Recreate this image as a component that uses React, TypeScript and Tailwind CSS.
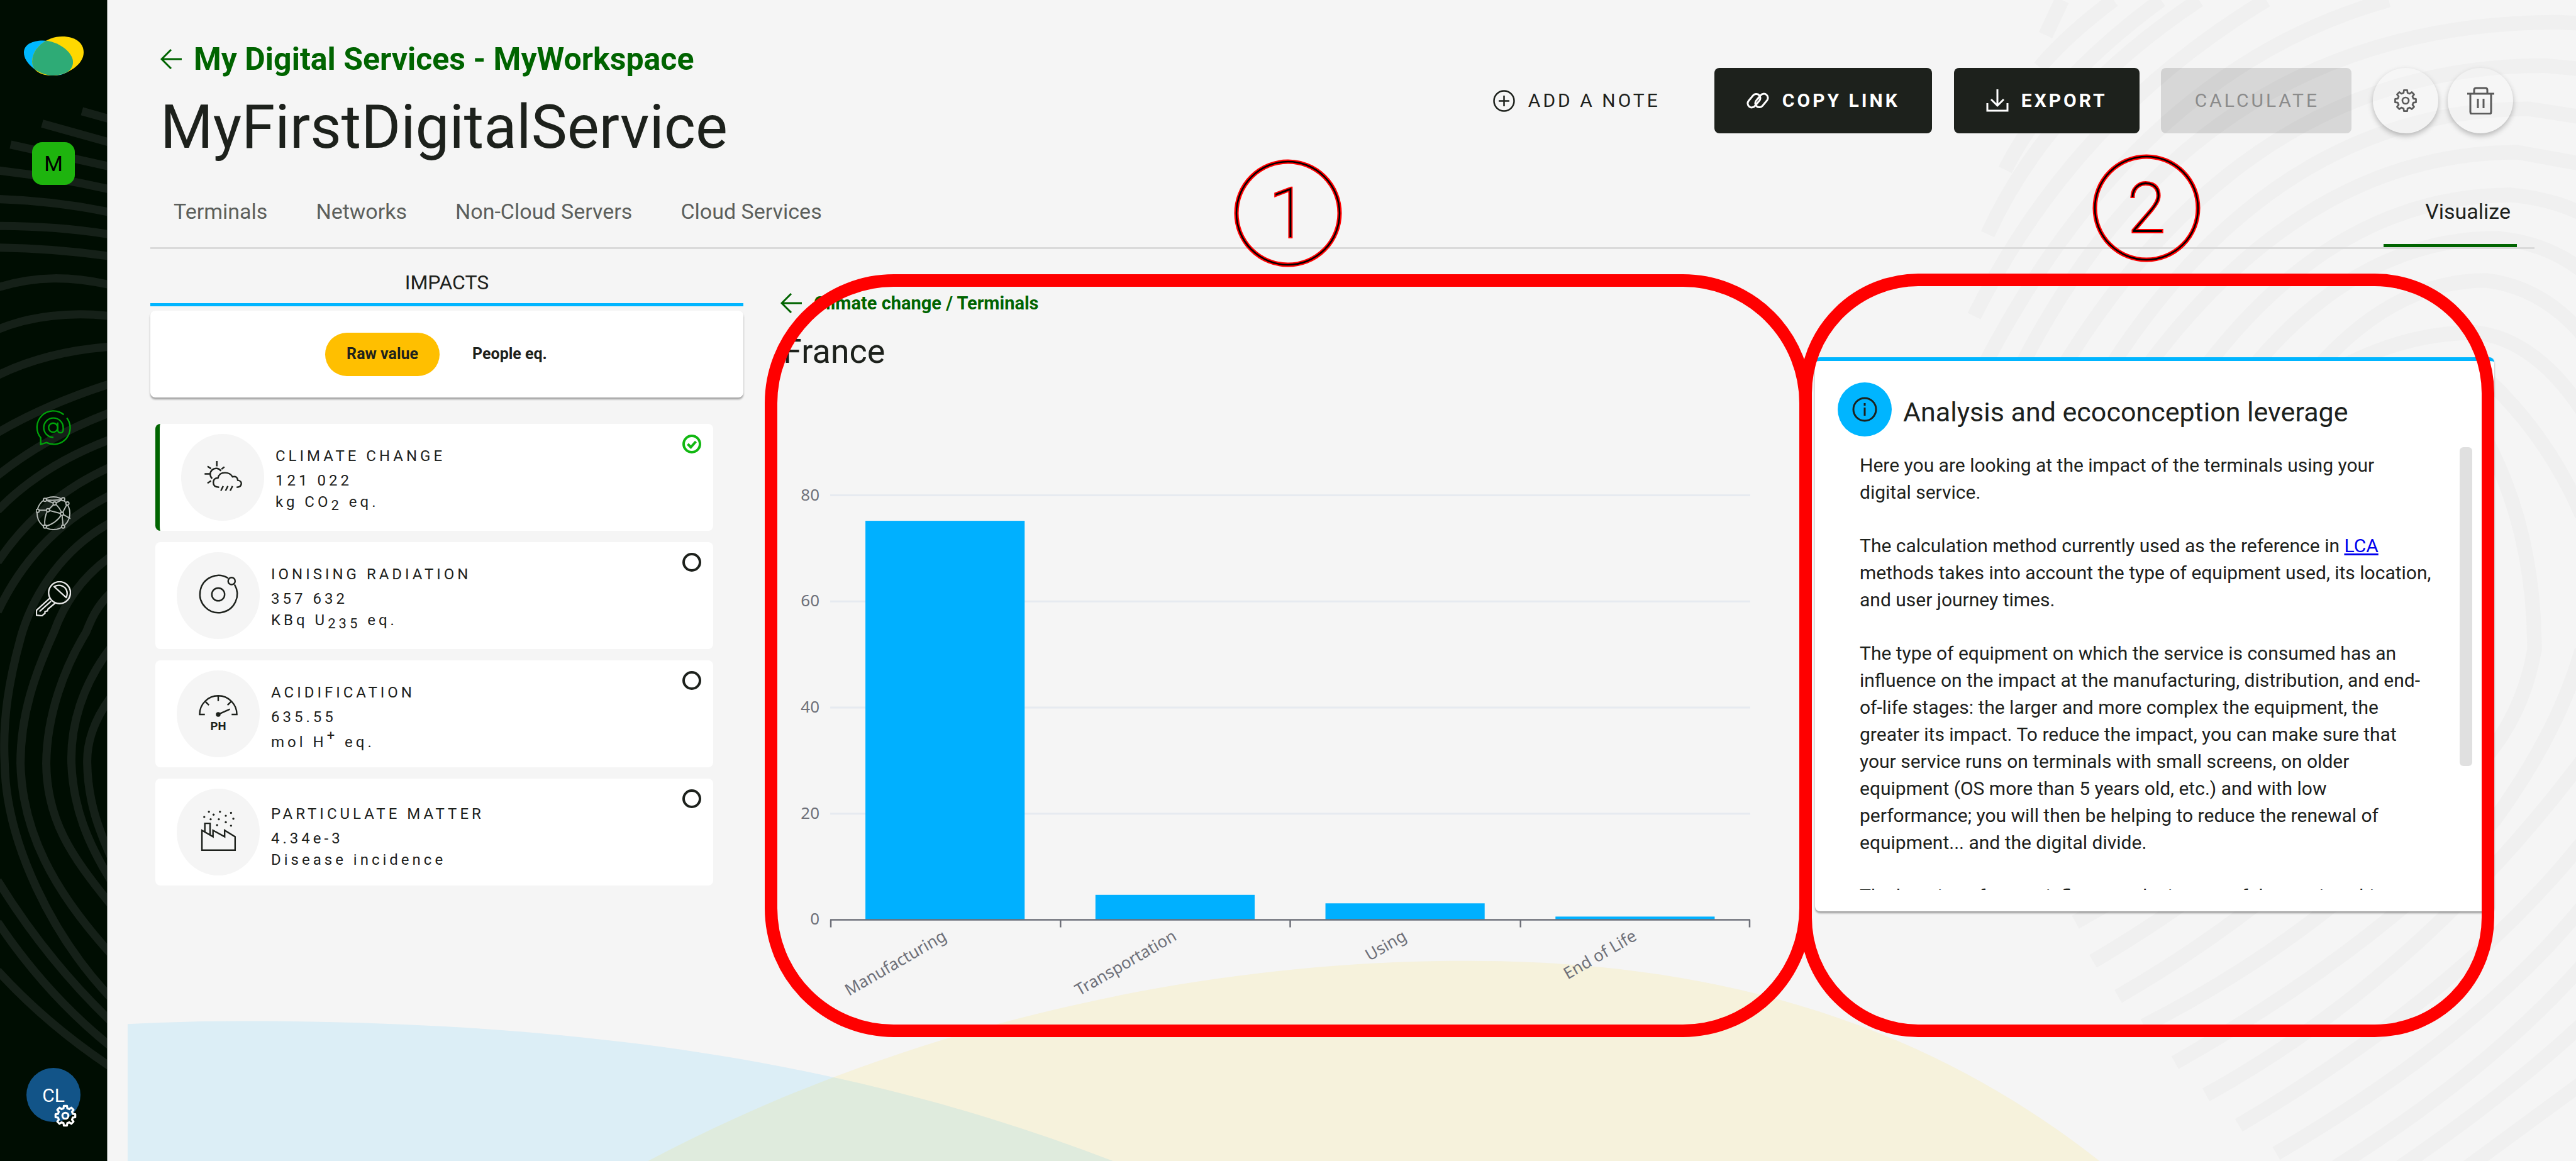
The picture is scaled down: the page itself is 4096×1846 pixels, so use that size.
import React, { useState } from "react";

const ARCS = [
  "M140 190L190 204", "M72 211L190 244", "M18 247L190 285", "M-4 291Q100 303 190 324",
  "M-4 340Q95 343 190 363", "M-4 386Q100 386 190 401", "M-4 423Q90 424 190 438",
  "M-4 491C60 471 120 471 190 487", "M-4 563C50 540 120 532 190 540", "M-4 641Q80 600 190 592",
  "M-4 739Q80 690 190 655", "M-4 812Q80 745 190 704", "M-4 872Q70 795 190 750",
  "M-4 960Q70 850 190 797", "M-4 1045Q60 910 190 845",
  "M190 892C110 935 60 1010 38 1080C15 1160 4 1230 8 1304C10 1440 90 1600 190 1705",
  "M190 950C140 985 110 1030 92 1080C60 1150 35 1220 35 1304C38 1420 90 1520 190 1630",
  "M190 1012C165 1035 155 1060 147 1080C110 1140 80 1220 79 1304C80 1400 120 1460 190 1546",
  "M190 1105C140 1170 120 1240 122 1304C125 1380 150 1440 190 1505",
  "M190 1190C160 1230 148 1270 149 1304C150 1370 170 1420 190 1465",
  "M-4 1504Q80 1640 190 1745", "M-4 1575Q80 1700 190 1788", "M-4 1658Q80 1750 190 1823",
];

const WAVES = [
  "M3522 0L3494 60", "M3610 0Q3530 60 3484 115", "M3691 0Q3500 140 3425 290",
  "M3756 0Q3500 170 3395 400", "M3871 0Q3540 200 3372 540", "M4080 0Q3650 120 3386 630",
  "M3440 650Q3740 38 4370 38L4410 40", "M3510 650Q3830 112 4345 112L4410 118",
  "M3590 650Q3880 186 4320 186L4410 200", "M3650 650Q3930 260 4300 260L4410 280",
  "M3750 650Q3980 333 4290 333Q4360 340 4410 365", "M3830 650Q4020 407 4265 407Q4350 415 4410 462",
  "M3940 650Q4080 479 4246 479Q4340 490 4410 570", "M3960 650Q4090 568 4229 568Q4330 580 4410 700",
  "M4240 640Q4350 740 4410 880", "M4240 740Q4329 900 4329 1110Q4310 1220 4240 1300Q4000 1580 3662 1752",
  "M3545 1575Q3700 1490 3800 1400", "M3575 1642Q3850 1480 4000 1300", "M3618 1702Q3950 1510 4150 1250",
  "M3715 1815Q4060 1620 4261 1400Q4370 1250 4410 1110", "M3768 1870Q4130 1670 4410 1300",
  "M3824 1922Q4200 1700 4410 1440", "M3888 1970Q4230 1770 4410 1550", "M3990 1993Q4250 1830 4410 1650",
  "M4100 1993Q4280 1870 4410 1750", "M4215 1993L4410 1850",
];

function Backdrop() {
  return (
    <svg aria-hidden="true" className="pointer-events-none absolute inset-0 h-full w-full" viewBox="0 0 4400 1983" preserveAspectRatio="xMinYMin slice" fill="none">
      {WAVES.map((d) => <path key={d} d={d} stroke="#f0f0f0" strokeWidth="25" />)}
      <path d="M218 1749Q320 1744 414 1744C960 1744 1440 1805 1901 1983H218Z" fill="#00b0ff" fillOpacity="0.1" />
      <path d="M1107 1983C1525 1762 2020 1641 2507 1641C2965 1641 3308 1764 3586 1983Z" fill="#ffd700" fillOpacity="0.1" />
    </svg>
  );
}

function BackArrow() {
  return (
    <svg aria-hidden="true" className="w-[34px] shrink-0" viewBox="0 0 34 32" fill="none" stroke="currentColor" strokeWidth="3">
      <path d="M34 16H2M17 1L2 16l15 15" />
    </svg>
  );
}

const COG = Array.from({ length: 8 }, (_, i) =>
  [[-9, 15], [9, 15], [14, 11.5], [31, 11.5]].map(([deg, r]) => {
    const a = ((i * 45 + deg) * Math.PI) / 180;
    return `${(17 + r * Math.sin(a)).toFixed(2)},${(17 - r * Math.cos(a)).toFixed(2)}`;
  }).join(" "),
).join(" ");

function Cog({ className, width = 2.4 }: { className?: string; width?: number }) {
  return (
    <svg aria-hidden="true" className={className} viewBox="0 0 34 34" fill="none" stroke="currentColor" strokeWidth={width} strokeLinejoin="round">
      <polygon points={COG} />
      <circle cx="17" cy="17" r="4.5" />
    </svg>
  );
}

const GLOBE_NODES = [[15, 7], [45, 6], [31, 13], [52, 13], [3, 25], [20, 24], [43, 30], [15, 51], [45, 51]];

function Sidebar() {
  return (
    <nav aria-label="Main" className="relative flex w-[171px] shrink-0 flex-col items-center overflow-hidden border-r border-[#8a8f8b] bg-[#000d02] pt-[58px] pb-[62px]">
      <svg aria-hidden="true" className="absolute inset-0 h-full w-full" viewBox="0 0 184 1983" preserveAspectRatio="xMinYMin slice" fill="none">
        {ARCS.map((d) => <path key={d} d={d} stroke="#152018" strokeWidth="14" />)}
      </svg>
      <a href="#home" aria-label="Home" className="relative">
        <svg className="w-[95px]" viewBox="0 0 101 66">
          <clipPath id="blue-leaf"><path d="M0 27C0 14 14 7 32 7C58 7 83 27 83 43C83 58 68 66 50 66C26 66 0 46 0 27Z" /></clipPath>
          <path d="M0 27C0 14 14 7 32 7C58 7 83 27 83 43C83 58 68 66 50 66C26 66 0 46 0 27Z" fill="#00b8ff" />
          <path d="M14 42C14 20 38 0 65 0C86 0 101 10 101 27C101 48 72 66 47 66C27 66 14 57 14 42Z" fill="#ffd800" />
          <path d="M14 42C14 20 38 0 65 0C86 0 101 10 101 27C101 48 72 66 47 66C27 66 14 57 14 42Z" fill="#2eab76" clipPath="url(#blue-leaf)" />
        </svg>
      </a>
      <button className="relative mt-[106px] flex h-17 w-17 items-center justify-center rounded-2xl bg-[#1eb40e] text-[34px] text-black">M</button>
      <a href="#services" aria-label="Digital services" className="relative mt-[358px] text-[#00a30a]">
        <svg className="w-[56px]" viewBox="0 0 58 58" fill="none" stroke="currentColor" strokeWidth="2.4">
          <path d="M51 13A27 27 0 0 1 17.500 53.500L8 56.500V45.500A27 27 0 0 1 46 7.500" />
          <circle cx="28.500" cy="29" r="7.500" />
          <path d="M36 20.500V33a4.500 4.500 0 0 0 9 0v-4A16 16 0 1 0 29 45" />
        </svg>
      </a>
      <a href="#inventories" aria-label="Inventories" className="relative mt-[80px] text-[#b4b9b5]">
        <svg className="w-[56px]" viewBox="0 0 58 58" fill="none" stroke="currentColor" strokeWidth="2">
          <circle cx="29" cy="29" r="27" />
          <path d="M15 7L31 13L45 6Q30 9 15 7M31 13L20 24H3M31 13Q40 20 43 30L52 13M20 24L43 30L57 38M20 24Q13 35 15 51Q35 45 43 30L45 51" />
          {GLOBE_NODES.map(([x, y]) => <circle key={`${x}-${y}`} cx={x} cy={y} r="2.600" fill="#000d02" />)}
        </svg>
      </a>
      <a href="#administration" aria-label="Administration" className="relative mt-[80px] text-[#e6e6e6]">
        <svg className="w-[56px]" viewBox="0 0 58 58" fill="none" stroke="currentColor" strokeWidth="2.400" strokeLinejoin="round">
          <circle cx="39" cy="19" r="18" />
          <path d="M30 9L50 27Q54 18 48 11Q40 4 30 9ZM23 28L1 48V56L10 57L15 53V50L19 49L20 46L32 36M25 33L6 50" />
        </svg>
      </a>
      <button aria-label="Account settings" className="relative mt-auto flex h-[86px] w-[86px] items-center justify-center rounded-full bg-[#125488] text-[30px] text-white">
        CL
        <Cog width={3} className="absolute top-[58px] left-[44px] w-[36px]" />
      </button>
    </nav>
  );
}

function Header() {
  return (
    <header className="flex items-start justify-between pt-16 pr-[34px]">
      <div className="text-[#1d211c]">
        <a href="#workspace" className="flex items-center gap-[19px] pl-4 text-[50px] leading-[60px] font-bold text-[#006400]">
          <BackArrow />
          My Digital Services - MyWorkspace
        </a>
        <h1 className="mt-[22px] pl-4 text-[96px] leading-[112px]">MyFirstDigitalService</h1>
      </div>
      <div className="mt-[44px] flex h-[104px] items-stretch text-[30px] leading-[34px] tracking-[4px]">
        <button className="flex items-center gap-[21px] px-[51px] text-[#1d211c]">
          <svg aria-hidden="true" className="w-[35px]" viewBox="0 0 35 35" fill="none" stroke="currentColor" strokeWidth="2.500">
            <circle cx="17.500" cy="17.500" r="16" />
            <path d="M17.500 9v17M9 17.500h17" />
          </svg>
          ADD A NOTE
        </button>
        <button className="ml-[35px] flex items-center gap-[21px] rounded-lg bg-[#1d211c] px-[51px] font-bold text-white">
          <svg aria-hidden="true" className="w-9" viewBox="0 0 36 36" fill="none" stroke="currentColor" strokeWidth="3">
            <g transform="rotate(-50 18 18)">
              <rect x="2" y="7" width="24" height="13" rx="6.500" />
              <rect x="10" y="16" width="24" height="13" rx="6.500" />
            </g>
          </svg>
          COPY LINK
        </button>
        <button className="ml-[35px] flex items-center gap-[20px] rounded-lg bg-[#1d211c] px-[51px] font-bold text-white">
          <svg aria-hidden="true" className="w-9" viewBox="0 0 36 36" fill="none" stroke="currentColor" strokeWidth="3">
            <path d="M18 0v25M8 16l10 10l10-10M2 22v12h32V22" />
          </svg>
          EXPORT
        </button>
        <button disabled className="ml-[34px] rounded-lg bg-black/12 pr-[51px] pl-[54px] text-[#8b8b8b]">CALCULATE</button>
        <button aria-label="Settings" className="ml-[34px] flex w-[104px] items-center justify-center rounded-full bg-white/10 text-[#5a5a5a] shadow-[0_4px_8px_rgba(0,0,0,0.25)]">
          <Cog className="w-[38px]" />
        </button>
        <button aria-label="Delete" className="ml-[15px] flex w-[104px] items-center justify-center rounded-full bg-white/10 text-[#5a5a5a] shadow-[0_4px_8px_rgba(0,0,0,0.25)]">
          <svg className="w-[43px]" viewBox="0 0 43 44" fill="none" stroke="currentColor" strokeWidth="3" strokeLinejoin="round">
            <path d="M0 11h43M5 11v29q0 3 3 3h27q3 0 3-3V11M11 11V5q0-3 3-3h15q3 0 3 3v6M17 19v15M26 19v15" />
          </svg>
        </button>
      </div>
    </header>
  );
}

const TABS = ["Terminals", "Networks", "Non-Cloud Servers", "Cloud Services"];

function Tabs() {
  return (
    <nav aria-label="Service sections" className="flex items-stretch border-b-[3px] border-[#dadada] pr-7 pl-[37px] text-[34px] leading-10 text-[#5c5f5c]">
      <div className="flex flex-1 gap-[77px]">
        {TABS.map((t) => <a key={t} href={`#${t}`} className="pt-[58px] pb-[37px]">{t}</a>)}
      </div>
      <a href="#visualize" aria-current="page" className="w-[212px] border-b-[5px] border-[#006400] pt-[58px] pr-[10px] pb-8 text-right text-[#1d211c]">Visualize</a>
    </nav>
  );
}

function WeatherIcon() {
  return (
    <>
      <path d="M-10-28v9M-26-19l6 4M-31-6h9M-26 10l6-4M3-18l-5 4" />
      <path d="M-18 2A10 10 0 1 1-3-11" />
      <path d="M-6 17q-10 0-10-8q0-8 8-8q2-9 12-9q9 0 13 7q8-2 9 6q7 1 6 7q-1 5-8 5" />
      <path d="M1 15l-4 8M9 15l-4 8M17 15l-4 8" />
    </>
  );
}

function RadiationIcon() {
  return (
    <>
      <path d="M17-30A32 32 0 1 0 28-19" />
      <circle cx="0" cy="-2" r="11" />
      <circle cx="23" cy="-25" r="6" />
    </>
  );
}

function AcidIcon() {
  return (
    <>
      <path d="M-23 1h-9a32 32 0 0 1 64 0h-9M0-31v9M-22-21l6 6M22-21l-6 6M0 1L20-8" />
      <circle cx="0" cy="1" r="4" fill="currentColor" stroke="none" />
      <text x="0" y="28" textAnchor="middle" fontSize="20" letterSpacing="0" fontWeight="700" fill="currentColor" stroke="none">PH</text>
    </>
  );
}

const DUST = [[-24, -26], [-16, -35], [-8, -30], [-13, -22], [3, -35], [1, -22], [13, -28], [-2, -12], [13, -17], [22, -33], [26, -23], [22, -11]];

function DustIcon() {
  return (
    <>
      <path d="M-28 31V-3L-9 8V-3L11 8V-3L29 8V31ZM-23 0V-15H-14V5" />
      {DUST.map(([x, y]) => <circle key={`${x}${y}`} cx={x} cy={y} r="1.800" fill="currentColor" stroke="none" />)}
    </>
  );
}

const IMPACTS = [
  { id: "climate", name: "CLIMATE CHANGE", value: "121 022", unit: <>kg CO<sub className="text-[22px]">2</sub> eq.</>, box: "h-[45px]", icon: <WeatherIcon /> },
  { id: "radiation", name: "IONISING RADIATION", value: "357 632", unit: <>KBq U<sub className="text-[22px]">235</sub> eq.</>, box: "h-[45px]", icon: <RadiationIcon /> },
  { id: "acid", name: "ACIDIFICATION", value: "635.55", unit: <>mol H<sup className="text-[22px]">+</sup> eq.</>, box: "h-[45px] pt-[6px]", icon: <AcidIcon /> },
  { id: "dust", name: "PARTICULATE MATTER", value: "4.34e-3", unit: <>Disease incidence</>, box: "h-[34px]", icon: <DustIcon /> },
];

function Impacts() {
  const [selected, setSelected] = useState("climate");
  return (
    <section className="w-[943px] shrink-0 text-[#1d211c]">
      <h2 className="pt-[33px] pb-[13px] text-center text-[32px] leading-10">IMPACTS</h2>
      <div className="h-[5px] bg-[#00b5ff]" />
      <div className="mt-[7px] flex h-[138px] items-center justify-center gap-[18px] rounded-lg bg-white text-[25px] font-bold shadow-[0_3px_3px_rgba(0,0,0,0.35)]">
        <button className="h-[69px] rounded-full bg-[#ffbf00] px-[34px]">Raw value</button>
        <button className="h-[69px] rounded-full px-[34px]">People eq.</button>
      </div>
      <div role="radiogroup" aria-label="Impact" className="mt-[42px] mr-12 ml-2 flex flex-col gap-[18px]">
        {IMPACTS.map((it) => (
          <label key={it.id} className={it.id === selected ? "relative flex h-[170px] items-center gap-[18px] rounded-lg border-l-[7px] border-[#006400] bg-white pl-[34px]" : "relative flex h-[170px] items-center gap-[18px] rounded-lg bg-white pl-[34px]"}>
            <span className="flex h-[138px] w-[132px] items-center justify-center rounded-[50%] bg-[#f5f5f5]">
              <svg aria-hidden="true" className="h-[74px] w-[74px] overflow-visible" viewBox="-40 -40 80 80" fill="none" stroke="currentColor" strokeWidth="2.600">{it.icon}</svg>
            </span>
            <span className="block pt-[15px] text-[24px] leading-[34px] tracking-[5px]">
              <span className="mb-[5px] block">{it.name}</span>
              <span className="block">{it.value}</span>
              <span className={`block ${it.box}`}>{it.unit}</span>
            </span>
            <input
              type="radio"
              name="impact"
              checked={it.id === selected}
              onChange={() => setSelected(it.id)}
              className="absolute top-[17px] right-[19px] h-[30px] w-[30px] appearance-none rounded-full border-4 border-[#1d211c] checked:border-[#12b812]"
            />
            {it.id === selected && (
              <svg aria-hidden="true" className="pointer-events-none absolute top-[17px] right-[19px] w-[30px] text-[#12b812]" viewBox="0 0 30 30" fill="none" stroke="currentColor" strokeWidth="4">
                <path d="M8.500 15l5 5l8-9" />
              </svg>
            )}
          </label>
        ))}
      </div>
    </section>
  );
}

const BARS = [
  { name: "Manufacturing", value: 75.2 },
  { name: "Transportation", value: 4.7 },
  { name: "Using", value: 3.1 },
  { name: "End of Life", value: 0.6 },
];
const BASE = 702;
const UNIT = 8.43;
const BAND = 365.5;

function Chart() {
  return (
    <section className="min-w-0 flex-1 pt-[69px] pl-[57px]">
      <a href="#terminals" className="flex items-center gap-[19px] pl-0.5 text-[29px] leading-[34px] font-bold text-[#006400]">
        <BackArrow />
        Climate change / Terminals
      </a>
      <h2 className="mt-7 pl-[6px] text-[54px] leading-16 text-[#1d211c]">France</h2>
      <div className="mt-[169px] mr-[85px] ml-[21px]">
        <svg className="w-full overflow-visible font-['Noto_Sans']" viewBox="0 0 1540 840" fontSize="26" fill="#6e7079" role="img" aria-label="Impact by life cycle stage">
          {[0, 20, 40, 60, 80].map((v) => (
            <g key={v}>
              {v > 0 && <path d={`M60 ${BASE - v * UNIT}H1522`} stroke="#e6eaf0" strokeWidth="3" />}
              <text x="43" y={BASE - v * UNIT + 8} textAnchor="end">{v}</text>
            </g>
          ))}
          {BARS.map((b, i) => (
            <g key={b.name}>
              <rect x={60 + BAND * i + 56} y={BASE - b.value * UNIT} width="253" height={b.value * UNIT} fill="#00b0ff" />
              <text transform={`translate(${60 + BAND * (i + 0.5) + 4} 733) rotate(-30)`} textAnchor="end">{b.name}</text>
            </g>
          ))}
          <path d={`M60 ${BASE}H1522M61 702v12M426 702v12M791 702v12M1157 702v12M1521 702v12`} stroke="#6e7079" strokeWidth="2.500" fill="none" />
        </svg>
      </div>
    </section>
  );
}

function Analysis() {
  return (
    <aside className="mr-16 w-[1080px] shrink-0 pt-[172px]">
      <div className="rounded-lg border-t-[6px] border-[#00b5ff] bg-white pt-[34px] pb-[34px] text-[#1d211c] shadow-[0_3px_3px_rgba(0,0,0,0.35)]">
        <div className="flex items-center gap-[18px] pl-9">
          <span className="flex h-[86px] w-[86px] items-center justify-center rounded-full bg-[#00b5ff]">
            <svg aria-hidden="true" className="w-10" viewBox="0 0 40 40" fill="none" stroke="currentColor" strokeWidth="3">
              <circle cx="20" cy="20" r="18" />
              <path d="M20 17v13M20 10v4" />
            </svg>
          </span>
          <h2 className="pt-2 text-[43px] leading-[52px]">Analysis and ecoconception leverage</h2>
        </div>
        <div className="mt-[17px] mr-[35px] flex h-[704px] gap-[37px] pl-[71px]">
          <div className="flex flex-1 flex-col gap-[42px] overflow-hidden pt-[7px] text-[30px] leading-[43px]">
            <p className="shrink-0">Here you are looking at the impact of the terminals using your<br />digital service.</p>
            <p className="shrink-0">The calculation method currently used as the reference in <a href="#lca" className="text-[#0000ee] underline">LCA</a><br />methods takes into account the type of equipment used, its location, and user journey times.</p>
            <p className="shrink-0">The type of equipment on which the service is consumed has an influence on the impact at the manufacturing, distribution, and end-of-life stages: the larger and more complex the equipment, the greater its impact. To reduce the impact, you can make sure that your service runs on terminals with small screens, on older equipment (OS more than 5 years old, etc.) and with low performance; you will then be helping to reduce the renewal of equipment... and the digital divide.</p>
            <p className="shrink-0">The location of usage influences the impact of the service: this</p>
          </div>
          <div className="h-[507px] w-5 shrink-0 rounded-md bg-[#e0e0e0]" />
        </div>
      </div>
    </aside>
  );
}

function Marker({ label, className }: { label: string; className: string }) {
  return (
    <svg className={className} viewBox="0 0 172 172" fill="none">
      <circle cx="86" cy="86" r="82" stroke="#f00" strokeWidth="7" />
      <circle cx="86" cy="86" r="82" stroke="#000" strokeWidth="2.500" />
      <text x="86" y="124" textAnchor="middle" fontSize="109" fontWeight="100" fill="#000" stroke="#f00" strokeWidth="4" paintOrder="stroke">{label}</text>
    </svg>
  );
}

export default function App() {
  return (
    <div className="relative flex min-h-screen w-full overflow-hidden bg-[#f5f5f5] font-['Roboto',sans-serif]">
      <Backdrop />
      <Sidebar />
      <main className="relative min-w-0 flex-1 pr-[66px] pl-[68px]">
        <Header />
        <Tabs />
        <div className="flex items-start">
          <Impacts />
          <Chart />
          <Analysis />
        </div>
      </main>
      <div className="pointer-events-none absolute top-[436px] left-[1216px] h-[1213px] w-[1665px] rounded-[205px] border-20 border-[#ff0000]" />
      <div className="pointer-events-none absolute top-[435px] left-[2861px] h-[1214px] w-[1105px] rounded-[190px] border-20 border-[#ff0000]" />
      <Marker label="1" className="pointer-events-none absolute top-[253px] left-[1962px] w-[172px]" />
      <Marker label="2" className="pointer-events-none absolute top-[245px] left-[3327px] w-[172px]" />
    </div>
  );
}
